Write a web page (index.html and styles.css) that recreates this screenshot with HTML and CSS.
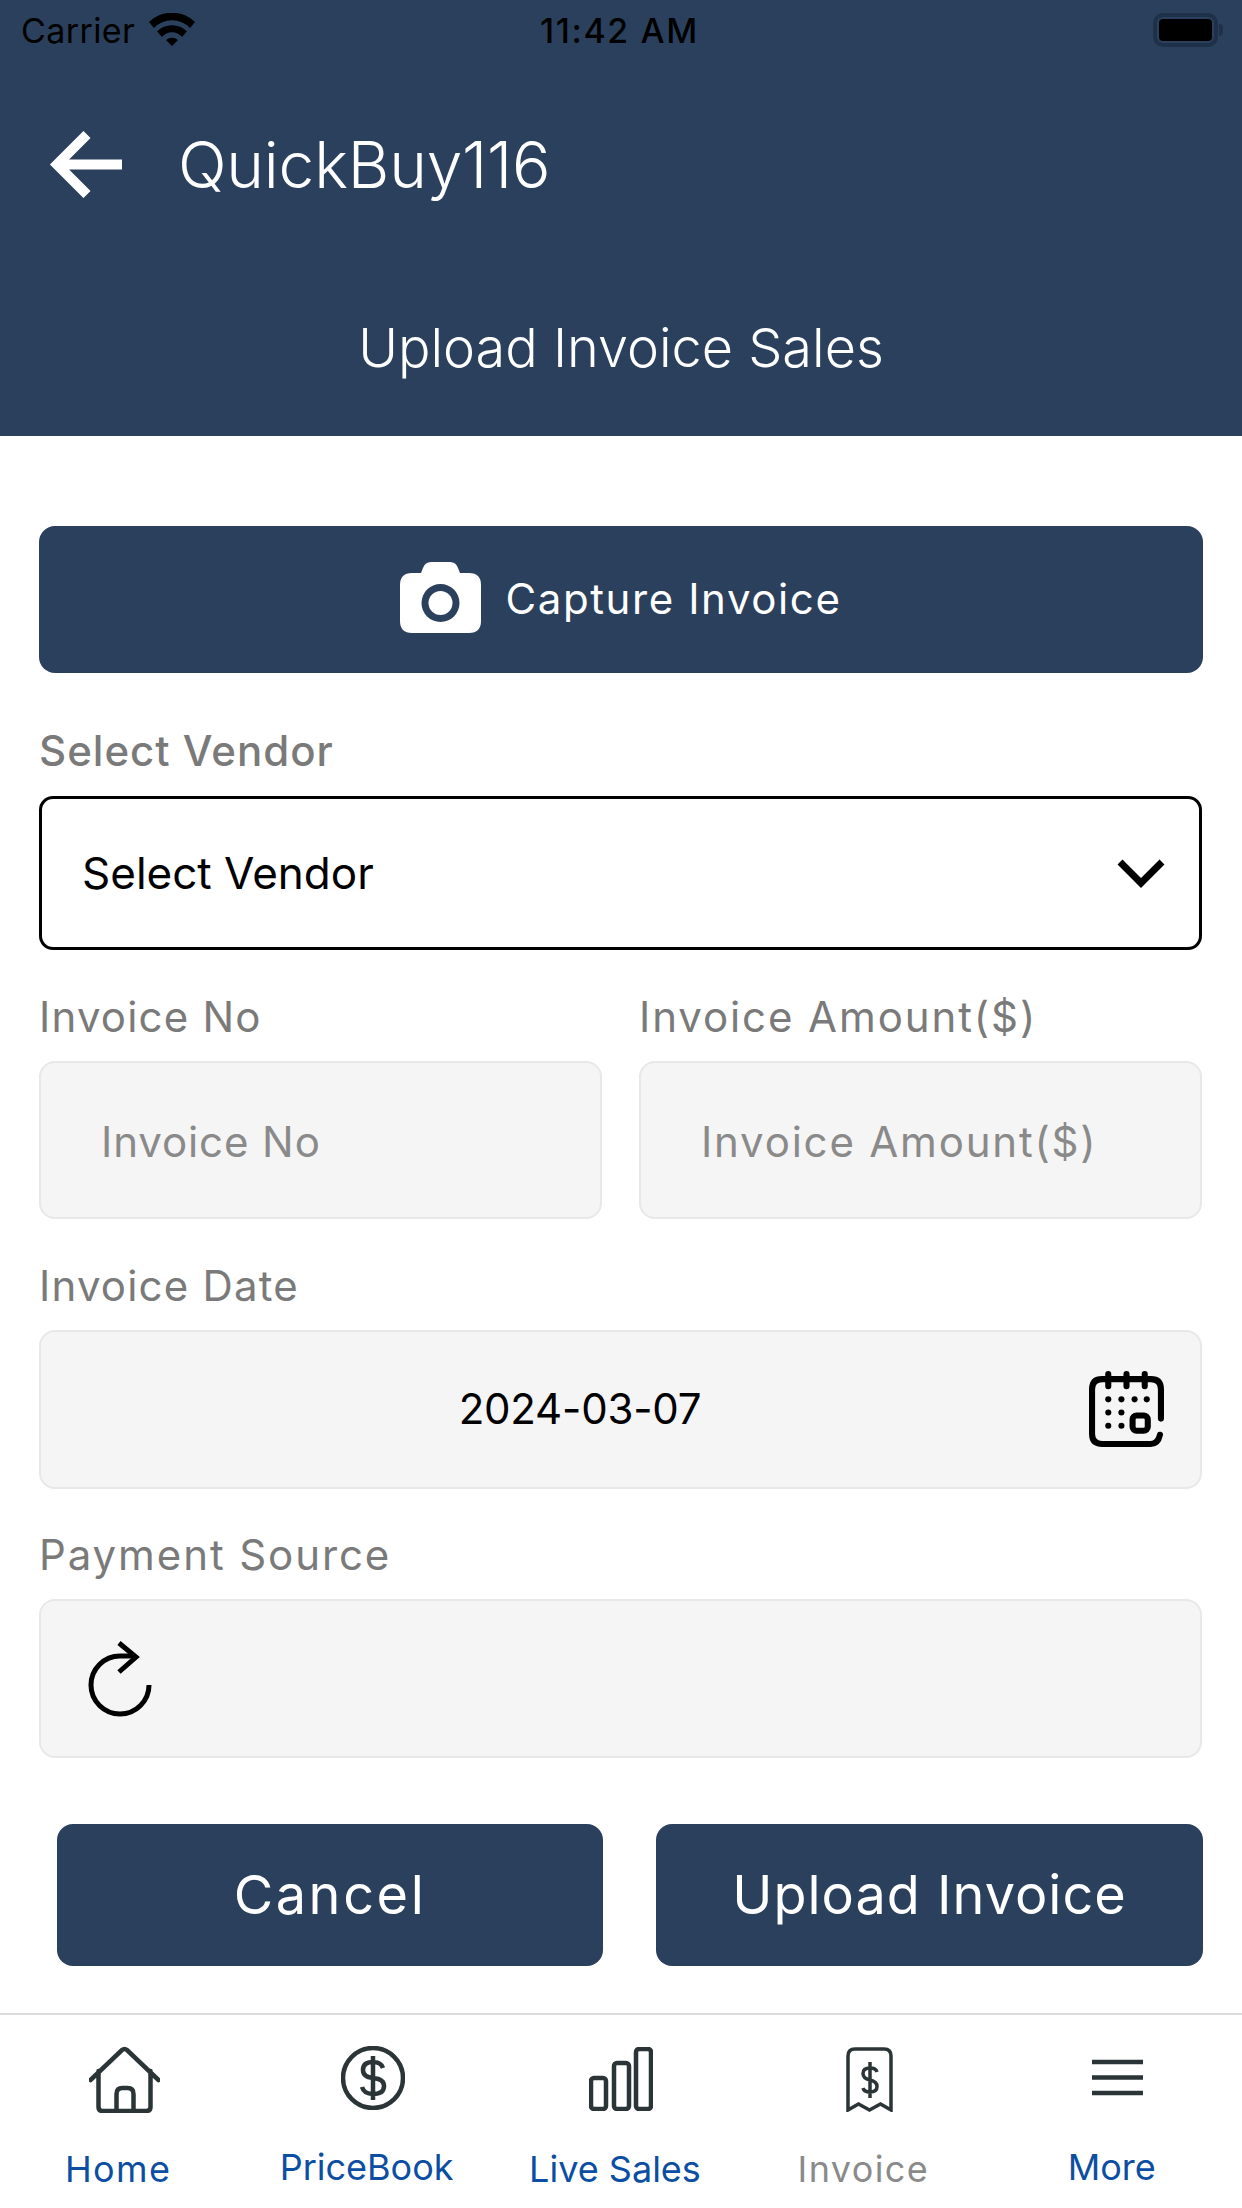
FILE: index.html
```html
<!DOCTYPE html>
<html lang="en">
<head>
<meta charset="utf-8">
<title>Upload Invoice Sales</title>
<link rel="stylesheet" href="styles.css">
</head>
<body>
<div class="page">
  <header class="header">
    <div class="status">
      <div class="status-left">
        <span class="carrier">Carrier</span>
        <svg class="wifi" viewBox="0 0 46 33"><path d="M0 9A33 33 0 0 1 46 9L41 15A25 25 0 0 0 5 15zM8 18.500A21 21 0 0 1 38 18.500L33 24A13 13 0 0 0 13 24zM17 27A9 9 0 0 1 29 27L23 33z"/></svg>
      </div>
      <span class="status-time">11:42 AM</span>
      <div class="battery"><div class="battery-fill"></div><div class="battery-nub"></div></div>
    </div>
    <div class="appbar">
      <svg class="back" viewBox="0 0 73 67"><path d="M73 33.500H10M38 3.500L8 33.500l30 30" fill="none" stroke="#fff" stroke-width="10"/></svg>
      <span class="app-title">QuickBuy116</span>
    </div>
    <div class="page-title">Upload Invoice Sales</div>
  </header>

  <main class="form">
    <button class="capture" type="button">
      <svg class="camera" viewBox="0 0 81 71"><path fill-rule="evenodd" fill="#fff" d="M12 11h9l2-5q2-6 8-6h19q6 0 8 6l2 5h9q12 0 12 12v36q0 12-12 12H12Q0 71 0 59V23q0-12 12-12zM40.500 22a19 19 0 1 0 0 38 19 19 0 0 0 0-38zm0 7a12 12 0 1 1 0 24 12 12 0 0 1 0-24z"/></svg>
      <span class="capture-text">Capture Invoice</span>
    </button>

    <label class="label label-strong vendor-label">Select Vendor</label>
    <div class="select">
      <span>Select Vendor</span>
      <svg class="chevron" viewBox="0 0 48 30"><path d="M3 4l21 21L45 4" fill="none" stroke="#000" stroke-width="7"/></svg>
    </div>

    <div class="row">
      <div class="col">
        <label class="label">Invoice No</label>
        <div class="input input-text"><span>Invoice No</span></div>
      </div>
      <div class="col">
        <label class="label label-wide">Invoice Amount($)</label>
        <div class="input input-text label-wide"><span>Invoice Amount($)</span></div>
      </div>
    </div>

    <label class="label">Invoice Date</label>
    <div class="input input-wide input-date">
      <span class="date-value">2024-03-07</span>
      <svg class="calendar" viewBox="0 0 76 76" fill="none" stroke="#000" stroke-linecap="round">
        <path stroke-width="6" d="M72 47V18q0-10-10-10H14Q4 8 4 18v44q0 10 10 10h48q7 0 9-9"/>
        <path stroke-width="6" d="M20 3v12M38 3v12M56 3v12"/>
        <rect x="44" y="44" width="15" height="15" rx="4" stroke-width="6"/>
        <g fill="#000" stroke="none">
          <circle cx="20" cy="28" r="3"/><circle cx="33" cy="28" r="3"/><circle cx="46" cy="28" r="3"/><circle cx="58" cy="28" r="3"/>
          <circle cx="20" cy="41" r="3"/><circle cx="33" cy="41" r="3"/>
          <circle cx="20" cy="54" r="3"/><circle cx="33" cy="54" r="3"/>
        </g>
      </svg>
    </div>

    <label class="label label-wide">Payment Source</label>
    <div class="input input-wide input-source">
      <svg class="refresh" viewBox="0 0 64 76" fill="none" stroke="#000" stroke-width="5"><path d="M61 44a29 29 0 1 1-29-29h14"/><path d="M31 2l17 14-17 15"/></svg>
    </div>

    <div class="actions">
      <button class="action action-cancel" type="button">Cancel</button>
      <button class="action" type="button">Upload Invoice</button>
    </div>
  </main>

  <nav class="tabs">
    <div class="tab">
      <svg class="tab-icon icon-home" viewBox="0 0 71 68"><path d="M1.500 35L33 5q2.500-2 5 0l31.500 30M9.500 26v36q0 4 4 4h44q4 0 4-4V26M27.500 66V49q0-6 6-6h5q6 0 6 6v17"/></svg>
      <span class="tab-label tab-label-wide">Home</span>
    </div>
    <div class="tab tab-raised">
      <svg class="tab-icon icon-dollar" viewBox="0 0 64 64"><circle cx="32" cy="32" r="30"/><path d="M42 22q-2-6-10-6-10 0-10 8 0 7 10 8 11 1 11 8 0 8-11 8-9 0-11-7M32 10v44"/></svg>
      <span class="tab-label">PriceBook</span>
    </div>
    <div class="tab">
      <svg class="tab-icon icon-bars" viewBox="0 0 64 64"><rect x="2" y="31" width="15" height="31" rx="3"/><rect x="25" y="16" width="15" height="46" rx="3"/><rect x="47" y="2" width="15" height="60" rx="3"/></svg>
      <span class="tab-label">Live Sales</span>
    </div>
    <div class="tab">
      <svg class="tab-icon icon-receipt" viewBox="0 0 47 65"><path d="M2 63V9q0-7 7-7h29q7 0 7 7v54l-10.500-6-11 6-11-6-10.500 6z"/><path d="M31 25q-1-4-7-4-7 0-7 5.500 0 5 7 6.500 7 1.500 7 6.500 0 5.500-7 5.500-6 0-7-4M24 15v36"/></svg>
      <span class="tab-label tab-label-wide tab-label-muted">Invoice</span>
    </div>
    <div class="tab tab-raised">
      <svg class="tab-icon icon-menu" viewBox="0 0 51 37"><path d="M0 3h51M0 18.500h51M0 34h51"/></svg>
      <span class="tab-label">More</span>
    </div>
  </nav>
</div>
</body>
</html>
```

FILE: styles.css
```css
* { box-sizing: border-box; }
html, body { margin: 0; padding: 0; background: #fff; }
.page {
  width: 1242px;
  height: 2208px;
  display: flex;
  flex-direction: column;
  font-family: "Inter", "Liberation Sans", sans-serif;
  overflow: hidden;
}
.header {
  height: 436px;
  background: #2b405c;
  color: #fff;
  display: flex;
  flex-direction: column;
  flex: none;
}
.status {
  height: 60px;
  padding: 0 24px 0 21px;
  display: grid;
  grid-template-columns: 1fr auto 1fr;
  align-items: center;
  color: #000;
  font-size: 34px;
}
.status-left { display: flex; align-items: center; gap: 14px; }
.carrier { letter-spacing: 0.4px; }
.wifi { width: 46px; height: 33px; margin-top: -2px; }
.status-time { font-weight: 500; letter-spacing: 1.6px; }
.battery {
  justify-self: end;
  width: 65px;
  height: 34px;
  border: 4px solid #1f3049;
  border-radius: 10px;
  padding: 2px;
  position: relative;
}
.battery-fill { width: 100%; height: 100%; background: #000; border-radius: 4px; }
.battery-nub {
  position: absolute;
  right: -9px;
  top: 7px;
  width: 4px;
  height: 12px;
  background: #1f3049;
  border-radius: 0 6px 6px 0;
}
.appbar {
  display: flex;
  align-items: center;
  padding: 0 0 0 49px;
  height: 148px;
  margin-top: 30px;
}
.back { width: 73px; height: 67px; flex: none; }
.app-title {
  margin-left: 56px;
  font-size: 64px;
  font-weight: 300;
  letter-spacing: -0.2px;
}
.page-title {
  margin-top: 78px;
  text-align: center;
  font-size: 54px;
  font-weight: 300;
  line-height: 64px;
}
.form {
  flex: 1;
  padding: 90px 39px 0;
  display: flex;
  flex-direction: column;
}
.capture {
  height: 147px;
  border: 0;
  border-radius: 16px;
  background: #2b405c;
  color: #fff;
  font: 400 42px "Inter", sans-serif;
  letter-spacing: 1.6px;
  display: flex;
  align-items: center;
  justify-content: center;
  gap: 24px;
  padding: 0;
}
.camera { width: 81px; height: 71px; margin-top: -5px; }
.capture-text { margin-top: -2px; }
.label {
  display: block;
  font-size: 42px;
  letter-spacing: 1.2px;
  line-height: 62px;
  color: #7a7a7a;
  height: 62px;
  margin-bottom: 13px;
}
.label-wide { letter-spacing: 1.9px; }
.label-strong { font-weight: 500; letter-spacing: 1px; }
.vendor-label { margin-top: 47px; margin-bottom: 14px; }
.select {
  height: 154px;
  margin-right: 1px;
  border: 3px solid #000;
  border-radius: 14px;
  display: flex;
  align-items: center;
  justify-content: space-between;
  padding: 0 34px 0 40px;
  font-size: 44px;
  color: #000;
}
.chevron { width: 48px; height: 30px; }
.row {
  display: grid;
  grid-template-columns: 563px 563px;
  column-gap: 37px;
  margin-top: 36px;
}
.input {
  height: 158px;
  background: #f5f5f5;
  border: 2.500px solid #e8e8e8;
  border-radius: 16px;
  display: flex;
  align-items: center;
  padding: 0 60px;
  font-size: 42px;
  color: #8a8a8a;
}
.input-text { padding-top: 2px; letter-spacing: 0.9px; }
.input-text.label-wide { letter-spacing: 1.8px; }
.input-wide { height: 159px; margin-right: 1px; }
.row + .label { margin-top: 36px; }
.input-date {
  position: relative;
  justify-content: center;
  color: #000;
  letter-spacing: -0.2px;
  padding: 0 81px 2px 0;
}
.calendar { position: absolute; right: 35px; top: 39px; width: 77px; height: 77px; }
.input-date + .label { margin-top: 35px; }
.input-source { padding: 0 0 0 47px; }
.refresh { width: 64px; height: 76px; }
.actions {
  display: grid;
  grid-template-columns: 546px 547px;
  column-gap: 53px;
  margin: 66px 0 0 18px;
}
.action {
  height: 142px;
  border: 0;
  border-radius: 16px;
  background: #2b405c;
  color: #fff;
  font: 400 54px "Inter", sans-serif;
  letter-spacing: 1px;
  padding: 0 0 2px;
}
.action-cancel { letter-spacing: 2.6px; }
.tabs {
  flex: none;
  height: 195px;
  border-top: 2px solid #dcdcdc;
  display: grid;
  grid-template-columns: repeat(5, 1fr);
}
.tab {
  display: flex;
  flex-direction: column;
  align-items: center;
  position: relative;
  padding-top: 30px;
}
.tab-icon {
  height: 68px;
  fill: none;
  stroke: #2b3436;
  stroke-width: 4.500;
}
.icon-home { width: 71px; stroke-linecap: round; }
.icon-dollar { width: 64px; height: 64px; margin-top: 1px; }
.icon-bars { width: 64px; height: 64px; margin-top: 2px; }
.icon-receipt { width: 47px; height: 65px; margin-top: 2px; stroke-width: 3.500; }
.icon-menu { width: 51px; height: 37px; margin-top: 14px; }
.tab-label {
  position: absolute;
  top: 131px;
  left: 0;
  right: 12px;
  text-align: center;
  font-size: 36px;
  line-height: 46px;
  color: #0b4ea2;
}
.tab-label-wide { letter-spacing: 1.4px; }
.tab-raised .tab-label { top: 129px; }
.tab-label-muted { color: #8a8a8a; }
```
